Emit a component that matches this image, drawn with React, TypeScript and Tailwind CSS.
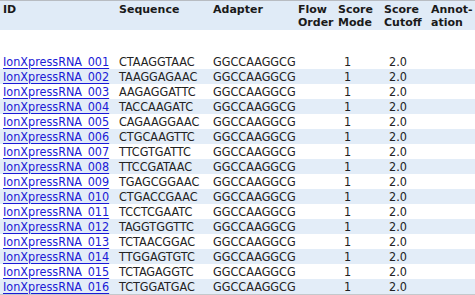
import React from "react";

type Barcode = { id: string; sequence: string };

const barcodes: Barcode[] = [
  { id: "IonXpressRNA_001", sequence: "CTAAGGTAAC" },
  { id: "IonXpressRNA_002", sequence: "TAAGGAGAAC" },
  { id: "IonXpressRNA_003", sequence: "AAGAGGATTC" },
  { id: "IonXpressRNA_004", sequence: "TACCAAGATC" },
  { id: "IonXpressRNA_005", sequence: "CAGAAGGAAC" },
  { id: "IonXpressRNA_006", sequence: "CTGCAAGTTC" },
  { id: "IonXpressRNA_007", sequence: "TTCGTGATTC" },
  { id: "IonXpressRNA_008", sequence: "TTCCGATAAC" },
  { id: "IonXpressRNA_009", sequence: "TGAGCGGAAC" },
  { id: "IonXpressRNA_010", sequence: "CTGACCGAAC" },
  { id: "IonXpressRNA_011", sequence: "TCCTCGAATC" },
  { id: "IonXpressRNA_012", sequence: "TAGGTGGTTC" },
  { id: "IonXpressRNA_013", sequence: "TCTAACGGAC" },
  { id: "IonXpressRNA_014", sequence: "TTGGAGTGTC" },
  { id: "IonXpressRNA_015", sequence: "TCTAGAGGTC" },
  { id: "IonXpressRNA_016", sequence: "TCTGGATGAC" },
];

const classes = {
  th: "align-top text-left font-bold pl-[3px] pt-[2px] leading-[13px] text-[11px] text-[#1a1a1a]",
  td: "h-[15px] p-0 pl-[3px] leading-[15px] whitespace-nowrap",
};

function App() {
  return (
    <div className="w-[475px] h-[295px] overflow-hidden bg-white" style={{ fontFamily: '"DejaVu Sans", Verdana, sans-serif' }}>
      <table className="table-fixed border-collapse w-[475px]">
        <colgroup>
          <col className="w-[116px]" />
          <col className="w-[94px]" />
          <col className="w-[85px]" />
          <col className="w-[40px]" />
          <col className="w-[46px]" />
          <col className="w-[47px]" />
          <col className="w-[47px]" />
        </colgroup>
        <thead>
          <tr className="h-[29px] bg-[#e0ebf7] border-t border-[#b8bcc2]">
            <th className={classes.th}>ID</th>
            <th className={classes.th}>Sequence</th>
            <th className={classes.th}>Adapter</th>
            <th className={classes.th}>
              Flow
              <br />
              Order
            </th>
            <th className={classes.th}>
              Score
              <br />
              Mode
            </th>
            <th className={classes.th}>
              Score
              <br />
              Cutoff
            </th>
            <th className={classes.th + " whitespace-nowrap"}>
              Annot-
              <br />
              ation
            </th>
          </tr>
        </thead>
        <tbody className="text-[12.5px] font-stretch-condensed text-[#222]">
          <tr className="h-[24px]">
            <td colSpan={7}></td>
          </tr>
          {barcodes.map((item, i) => (
            <tr key={item.id} className={i % 2 === 1 ? "bg-[#e3edf8]" : "bg-white"}>
              <td className={classes.td}>
                <a href="#" className="text-[#1a1ad6] underline underline-offset-2">
                  {item.id}
                </a>
              </td>
              <td className={classes.td}>{item.sequence}</td>
              <td className={classes.td}>GGCCAAGGCG</td>
              <td className={classes.td}></td>
              <td className={classes.td + " pl-[9px]"}>1</td>
              <td className={classes.td + " pl-[8px]"}>2.0</td>
              <td className={classes.td}></td>
            </tr>
          ))}
        </tbody>
      </table>
      <div className="h-[1px] bg-[#c4c8cc]" />
    </div>
  );
}

export default App;
